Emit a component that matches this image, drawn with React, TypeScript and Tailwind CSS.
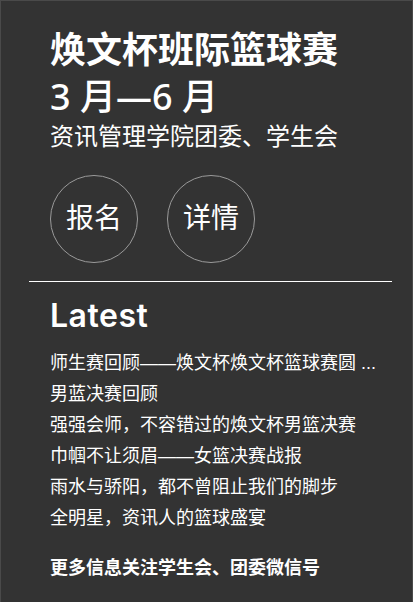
import React from 'react';

const news = [
    '师生赛回顾——焕文杯焕文杯篮球赛圆 ...',
    '男蓝决赛回顾',
    '强强会师，不容错过的焕文杯男篮决赛',
    '巾帼不让须眉——女篮决赛战报',
    '雨水与骄阳，都不曾阻止我们的脚步',
    '全明星，资讯人的篮球盛宴',
];

const App: React.FC = () => {
    return (
        <div
            lang="zh-CN"
            className="min-h-[602px] w-[413px] bg-[#333333] text-white border-x border-t border-[#4a4a4a] overflow-hidden"
            style={{ fontFamily: '"Liberation Sans", "Noto Sans CJK SC", sans-serif' }}
        >
            <div className="pl-[49px] pt-[27px]">
                <h1 className="text-[36px] leading-[46px] font-bold">焕文杯班际篮球赛</h1>
                <p className="text-[36px] leading-[46px] font-medium" style={{ fontFamily: '"Noto Sans", "Noto Sans CJK SC", sans-serif' }}>3 月—6 月</p>
                <p className="text-[24px] leading-[32px] mt-[1px]">资讯管理学院团委、学生会</p>

                <div className="flex gap-[29px] mt-[22px]">
                    <a className="flex items-center justify-center w-[88px] h-[88px] rounded-full border border-[#9a9a9a] text-[28px]">报名</a>
                    <a className="flex items-center justify-center w-[88px] h-[88px] rounded-full border border-[#9a9a9a] text-[28px]">详情</a>
                </div>
            </div>

            <hr className="mt-[18px] ml-[28px] mr-[20px] border-0 h-px bg-white" />

            <div className="pl-[49px] pt-[14px]">
                <h2 className="text-[32px] leading-[40px] font-semibold tracking-[0.5px]" style={{ fontFamily: 'Inter, "Noto Sans CJK SC", sans-serif' }}>Latest</h2>
                <ul className="mt-[12px]">
                    {news.map((item, i) => (
                        <li key={i} className="text-[18px] leading-[31px] whitespace-nowrap">{item}</li>
                    ))}
                </ul>
                <p className="text-[18px] leading-[31px] font-bold mt-[19px]">更多信息关注学生会、团委微信号</p>
            </div>
        </div>
    );
};

export default App;
